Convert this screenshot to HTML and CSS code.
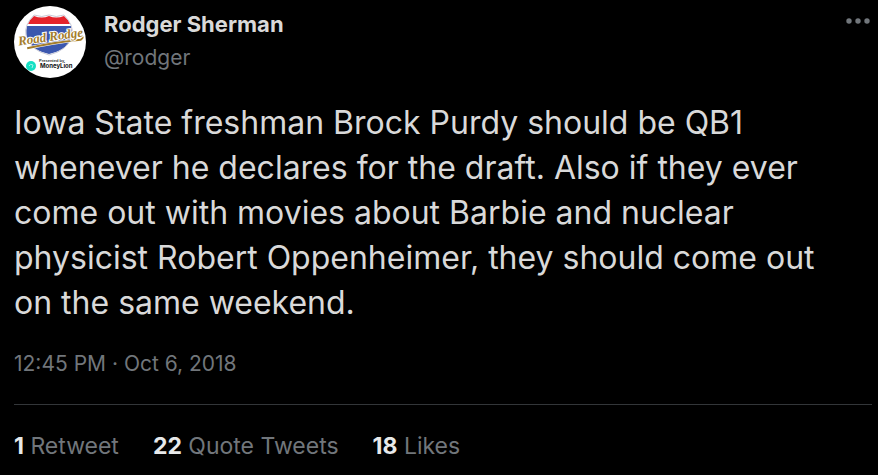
FILE: index.html
```html
<!DOCTYPE html>
<html lang="en">
<head>
  <meta charset="UTF-8">
  <meta name="viewport" content="width=device-width, initial-scale=1.0">
  <title>Rodger Sherman</title>
  <link rel="stylesheet" href="styles.css">
</head>
<body>
  <article class="tweet">
    <header class="tweet-header">
      <a class="avatar" href="#" aria-label="Rodger Sherman">
        <svg viewBox="0 0 72 72" width="72" height="72">
          <circle cx="36" cy="36" r="36" fill="#fff"/>
          <!-- shield -->
          <path d="M20 10 Q28 13 35 10 Q42 13 50 10 Q54 13 56 18 H14 Q16 13 20 10Z" fill="#e5232b"/>
          <path d="M13 20 H57 Q59 28 56 35 Q52 44 35 48 Q18 44 14 35 Q11 28 13 20Z" fill="#3b57ae"/>
          <path d="M20 9 Q28 12 35 9 Q42 12 50 9 Q60 19 58 29 Q55 44 35 49 Q15 44 12 29 Q10 19 20 9Z" fill="none" stroke="#c9cbd8" stroke-width="1"/>
          <!-- name and its underline -->
          <g transform="rotate(-8 36 32)">
            <path d="M12 39 Q38 37 66 38 Q71 36 66 33" fill="none" stroke="#fff" stroke-width="3"/>
            <path d="M12 39 Q38 37 66 38 Q71 36 66 33" fill="none" stroke="#a47d2c" stroke-width="2"/>
            <text class="logo-name" x="4" y="35">Road Rodge</text>
          </g>
          <text class="logo-note" x="25" y="56">Presented by</text>
          <circle cx="17" cy="60" r="5" fill="#16e0c4"/>
          <path d="M15 60 Q16 57 19 59 L18 62" fill="none" stroke="#9ff5e8" stroke-width="1"/>
          <text class="logo-sponsor" x="26" y="62">MoneyLion</text>
        </svg>
      </a>
      <div class="author">
        <a class="name" href="#">Rodger Sherman</a>
        <a class="handle" href="#">@rodger</a>
      </div>
      <button class="more" type="button" aria-label="More">
        <svg viewBox="0 0 24 6" width="24" height="6" fill="#71767b">
          <circle cx="3" cy="3" r="2.7"/>
          <circle cx="12" cy="3" r="2.7"/>
          <circle cx="21" cy="3" r="2.7"/>
        </svg>
      </button>
    </header>
    <p class="tweet-text">Iowa State freshman Brock Purdy should be QB1 whenever he declares for the draft. Also if they ever come out with movies about Barbie and nuclear physicist Robert Oppenheimer, they should come out on the same weekend.</p>
    <a class="date" href="#">12:45 PM · Oct 6, 2018</a>
    <footer class="stats">
      <a href="#"><strong>1</strong> Retweet</a>
      <a href="#"><strong>22</strong> Quote Tweets</a>
      <a href="#"><strong>18</strong> Likes</a>
    </footer>
  </article>
</body>
</html>
```
FILE: styles.css
```css
body {
  margin: 0;
  background-color: #000;
  color: #d9d9d9;
  font-family: Inter, "Liberation Sans", sans-serif;
  font-size: 21px;
  line-height: 34px;
}

a {
  color: inherit;
  text-decoration: none;
}

.tweet {
  padding: 6px 6px 0 14px;
}

.tweet-header {
  display: flex;
  align-items: flex-start;
  gap: 18px;
}

.avatar,
.avatar svg,
.more svg {
  display: block;
}

.logo-name {
  font: italic bold 13px "Liberation Serif", serif;
  fill: #a47d2c;
  stroke: #fff;
  stroke-width: 2px;
  paint-order: stroke;
}

.logo-note {
  font: bold 4px "Liberation Sans", sans-serif;
  fill: #333;
}

.logo-sponsor {
  font: bold 6px Inter, sans-serif;
  fill: #111;
}

.author {
  display: flex;
  flex: 1;
  flex-direction: column;
  align-items: flex-start;
  padding-top: 1px;
}

.name {
  font-size: 22px;
  font-weight: 700;
}

.handle,
.date,
.stats {
  color: #71767b;
}

.more {
  margin: 12px 2px 0 0;
  padding: 0;
  border: none;
  background: none;
  cursor: pointer;
}

.tweet-text {
  margin: 22px 0;
  padding-right: 24px;
  font-size: 32px;
  line-height: 45px;
}

.date {
  display: block;
}

.stats {
  display: flex;
  gap: 34px;
  margin-top: 23px;
  padding: 24px 0 11px;
  border-top: 1px solid #333639;
  font-size: 23px;
}

.stats strong {
  color: #e7e9ea;
  font-weight: 700;
}
```
